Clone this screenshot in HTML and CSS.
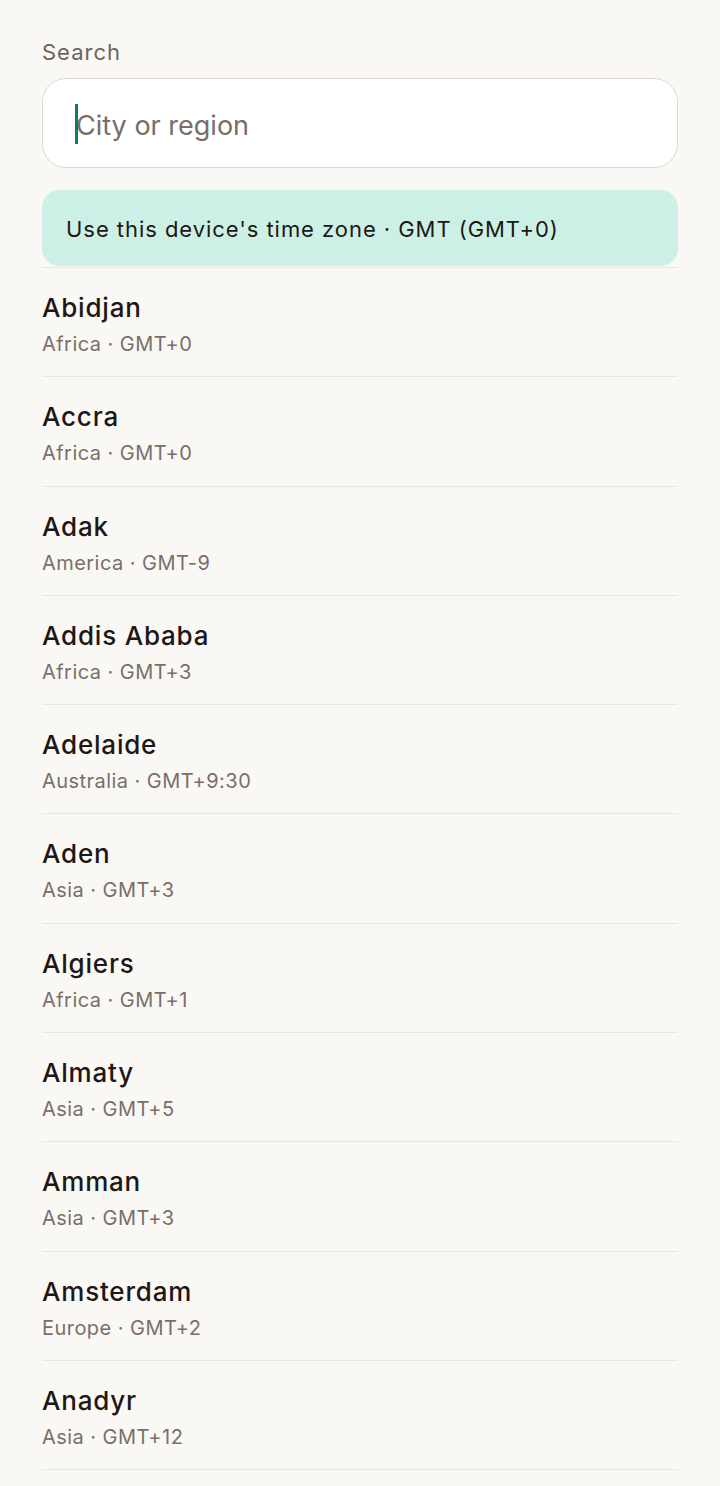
FILE: index.html
```html
<!DOCTYPE html>
<html lang="en">
<head>
  <meta charset="UTF-8" />
  <meta name="viewport" content="width=device-width, initial-scale=1.0"/>
  <title>Time zone</title>
  <link rel="stylesheet" href="styles.css">
</head>
<body>
  <div class="container">
    <label class="search-label">Search</label>
    <div class="search-box">
      <span class="caret"></span>
      <span class="placeholder">City or region</span>
    </div>

    <button class="device-btn">Use this device's time zone · GMT (GMT+0)</button>

    <ul class="zone-list">
      <li><span class="city">Abidjan</span><span class="meta">Africa · GMT+0</span></li>
      <li><span class="city">Accra</span><span class="meta">Africa · GMT+0</span></li>
      <li><span class="city">Adak</span><span class="meta">America · GMT-9</span></li>
      <li><span class="city">Addis Ababa</span><span class="meta">Africa · GMT+3</span></li>
      <li><span class="city">Adelaide</span><span class="meta">Australia · GMT+9:30</span></li>
      <li><span class="city">Aden</span><span class="meta">Asia · GMT+3</span></li>
      <li><span class="city">Algiers</span><span class="meta">Africa · GMT+1</span></li>
      <li><span class="city">Almaty</span><span class="meta">Asia · GMT+5</span></li>
      <li><span class="city">Amman</span><span class="meta">Asia · GMT+3</span></li>
      <li><span class="city">Amsterdam</span><span class="meta">Europe · GMT+2</span></li>
      <li><span class="city">Anadyr</span><span class="meta">Asia · GMT+12</span></li>
    </ul>
  </div>
</body>
</html>
```

FILE: styles.css
```css
:root {
  --bg: #f9f8f5;
  --text: #1e1713;
  --muted: #7a6f68;
  --line: #e9e5e0;
  --accent: #0e7a66;
  --accent-soft: #cdf0e6;
  --font: Inter, "Noto Sans", sans-serif;
}

html, body {
  margin: 0;
  padding: 0;
  background: var(--bg);
  font-family: var(--font);
  color: var(--text);
}

.container {
  padding: 37px 42px 0;
}

.search-label {
  display: block;
  font-size: 22px;
  line-height: 30px;
  letter-spacing: 1px;
  color: #6e645e;
  margin-bottom: 11px;
}

.search-box {
  display: flex;
  align-items: center;
  height: 88px;
  padding: 0 32px;
  background: #fff;
  border: 1px solid #ded9d4;
  border-radius: 24px;
}

.caret {
  width: 3px;
  height: 40px;
  margin-top: 2px;
  background: var(--accent);
}

.placeholder {
  font-size: 27px;
  padding-top: 4px;
  color: #786d67;
  margin-left: -2px;
}

.device-btn {
  display: block;
  width: 100%;
  height: 76px;
  margin-top: 22px;
  padding: 2px 24px 0;
  text-align: left;
  font-family: var(--font);
  font-size: 22px;
  letter-spacing: 0.95px;
  color: var(--text);
  background: var(--accent-soft);
  border: none;
  border-radius: 18px;
}

.zone-list {
  list-style: none;
  margin: 1px 0 0;
  padding: 0;
  border-top: 1px solid var(--line);
}

.zone-list li {
  display: flex;
  flex-direction: column;
  padding: 23px 0 19.3px;
  border-bottom: 1px solid var(--line);
}

.city {
  font-size: 26px;
  line-height: 34px;
  font-weight: 500;
  letter-spacing: 0.8px;
}

.meta {
  margin-top: 6px;
  font-size: 20px;
  line-height: 26px;
  letter-spacing: 0.45px;
  color: var(--muted);
}
```
